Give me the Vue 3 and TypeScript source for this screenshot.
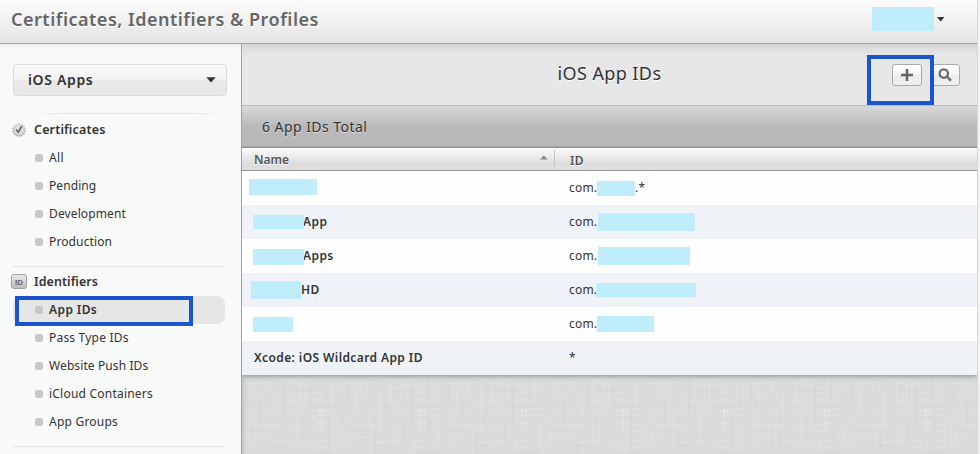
<script setup lang="ts">
interface Box { x: number; y: number; w: number; h: number }
interface Row { name: string; nameX: number; id: string; tail?: string; tailX?: number; nameBox?: Box; idBox?: Box }
interface Item { label: string; active?: boolean; ls: number }
interface Group { title: string; icon: 'seal' | 'id'; ls: number; items: Item[] }

const groups: Group[] = [
  { title: 'Certificates', icon: 'seal', ls: 0.15, items: [
    { label: 'All', ls: 0.4 }, { label: 'Pending', ls: 0.08 },
    { label: 'Development', ls: 0.12 }, { label: 'Production', ls: 0.12 },
  ] },
  { title: 'Identifiers', icon: 'id', ls: 0.05, items: [
    { label: 'App IDs', active: true, ls: 0.4 }, { label: 'Pass Type IDs', ls: 0.2 },
    { label: 'Website Push IDs', ls: 0.1 }, { label: 'iCloud Containers', ls: 0.22 },
    { label: 'App Groups', ls: 0.22 },
  ] },
]

// Box coordinates are relative to the cell that holds them.
const rows: Row[] = [
  { name: '', nameX: 12, id: 'com.', tail: '.*', tailX: 79, nameBox: { x: 7, y: 8, w: 68, h: 16 }, idBox: { x: 41, y: 10, w: 38, h: 15 } },
  { name: 'App', nameX: 61, id: 'com.', nameBox: { x: 11, y: 10, w: 51, h: 14 }, idBox: { x: 42, y: 8, w: 97, h: 18 } },
  { name: 'Apps', nameX: 61, id: 'com.', nameBox: { x: 11, y: 10, w: 51, h: 16 }, idBox: { x: 42, y: 8, w: 92, h: 18 } },
  { name: 'HD', nameX: 59, id: 'com.', nameBox: { x: 9, y: 8, w: 50, h: 18 }, idBox: { x: 40, y: 10, w: 100, h: 14 } },
  { name: '', nameX: 12, id: 'com.', nameBox: { x: 11, y: 10, w: 40, h: 15 }, idBox: { x: 41, y: 9, w: 57, h: 16 } },
  { name: 'Xcode: iOS Wildcard App ID', nameX: 12, id: '*' },
]

const place = (b: Box) => ({ left: b.x + 'px', top: b.y + 'px', width: b.w + 'px', height: b.h + 'px' })

const sealPoints = Array.from({ length: 28 }, (_, i) => {
  const r = i % 2 ? 6 : 7.5
  const a = (i * Math.PI) / 14
  return `${(8 + r * Math.sin(a)).toFixed(2)},${(8 - r * Math.cos(a)).toFixed(2)}`
}).join(' ')
</script>

<template>
  <div class="page">
    <header class="top">
      <h1>Certificates, Identifiers &amp; Profiles</h1>
      <div class="account">
        <span class="user"></span>
        <svg width="8" height="5" viewBox="0 0 8 5"><path d="M0 0h7.4L3.7 4.6z" fill="#333" /></svg>
      </div>
    </header>
    <div class="body">
      <nav class="side">
        <div class="select">
          <span>iOS Apps</span>
          <svg width="10" height="6" viewBox="0 0 10 6"><path d="M.3.2h9.4L5 5.6z" fill="#333" /></svg>
        </div>
        <div class="fade"></div>
        <section v-for="g in groups" :key="g.title" class="group">
          <div class="group-title">
            <svg v-if="g.icon === 'seal'" class="icon" width="16" height="16" viewBox="0 0 16 16">
              <defs><linearGradient id="sg" x1="0" y1="0" x2="0" y2="1"><stop offset="0" stop-color="#d8d8d8" /><stop offset="1" stop-color="#b4b4b4" /></linearGradient></defs>
              <polygon :points="sealPoints" fill="url(#sg)" />
              <circle cx="8" cy="8" r="4.9" fill="#dedede" />
              <path d="M5.1 7.4l2.2 2.8L10.8 4.1" fill="none" stroke="#5c5c5c" stroke-width="1.5" />
            </svg>
            <svg v-else class="icon" width="16" height="16" viewBox="0 0 16 16">
              <defs><linearGradient id="ig" x1="0" y1="0" x2="0" y2="1"><stop offset="0" stop-color="#e8e8e8" /><stop offset="1" stop-color="#bbb" /></linearGradient></defs>
              <rect x=".5" y=".5" width="15" height="14" rx="2.5" fill="url(#ig)" stroke="#a2a2a2" />
              <text x="8" y="10.7" text-anchor="middle" class="idtext">ID</text>
            </svg>
            <span :style="{ letterSpacing: g.ls + 'px' }">{{ g.title }}</span>
          </div>
          <div v-for="it in g.items" :key="it.label" class="item" :class="{ active: it.active }">
            <i></i><span :style="{ letterSpacing: it.ls + 'px' }">{{ it.label }}</span>
            <b v-if="it.active" class="frame nav-frame"></b>
          </div>
        </section>
      </nav>
      <main class="main">
        <div class="toolbar">
          <h2>iOS App IDs</h2>
          <div class="btn add">
            <svg width="12" height="12" viewBox="0 0 12 12"><path d="M6 0v12M0 6h12" stroke="#666" stroke-width="2.6" /></svg>
          </div>
          <div class="btn search">
            <svg width="15" height="14" viewBox="0 0 15 14"><circle cx="5.8" cy="5.6" r="4.2" fill="none" stroke="#6a6a6a" stroke-width="2.2" /><path d="M8.8 8.5l4.2 4.2" stroke="#6a6a6a" stroke-width="2.4" /></svg>
          </div>
          <b class="frame add-frame"></b>
        </div>
        <div class="count">6 App IDs Total</div>
        <div class="thead">
          <div class="th-name"><span>Name</span><svg width="8" height="5" viewBox="0 0 8 5"><path d="M0 4.6h7.6L3.8 .4z" fill="#888" /></svg></div>
          <div class="th-id">ID</div>
        </div>
        <div class="rows">
          <div v-for="(r, n) in rows" :key="n" class="row">
            <div class="cell name" :style="{ paddingLeft: r.nameX + 'px' }">
              {{ r.name }}<span v-if="r.nameBox" class="mask" :style="place(r.nameBox)"></span>
            </div>
            <div class="cell idc">
              <span>{{ r.id }}</span>
              <span v-if="r.idBox" class="mask" :style="place(r.idBox)"></span>
              <span v-if="r.tail" class="tail" :style="{ left: r.tailX + 'px' }">{{ r.tail }}</span>
            </div>
          </div>
        </div>
        <div class="linen">
          <svg width="100%" height="100%">
            <defs>
              <pattern id="weave" width="101" height="80" patternUnits="userSpaceOnUse">
                <g fill="none" stroke="#fff" stroke-opacity=".13" stroke-width="1">
                  <path d="M2 8.5h22M40 5.5h30M72 12.5h28M8 20.5h14M30 26.5h30M62 24.5h20M4 37.5h28M44 35.5h34M80 40.5h18M10 49.5h30M46 52.5h22M70 56.5h26M2 62.5h20M34 66.5h30M66 72.5h30" />
                  <path d="M12.5 10v26M24.5 2v18M36.5 16v40M48.5 6v22M58.5 2v24M63.5 8v18M78.5 26v34M90.5 4v30M6.5 42v30M28.5 50v26M54.5 38v30M72.5 60v18M96.5 44v30" />
                </g>
                <g fill="none" stroke="#b9bfc4" stroke-opacity=".18" stroke-width="1">
                  <path d="M14 4.5h20M50 16.5h24M2 28.5h24M66 32.5h30M30 44.5h30M4 55.5h24M56 60.5h34M20 70.5h24M70 77.5h26" />
                  <path d="M4.5 6v22M18.5 24v30M42.5 4v34M68.5 10v40M84.5 2v22M86.5 40v36M32.5 58v20M60.5 44v24" />
                </g>
                <path d="M77.5 34v7M81.5 34v7M75 36.5h9M77.5 46v7M81.5 46v7M75 48.5h9" stroke="#fff" stroke-opacity=".2" />
              </pattern>
            </defs>
            <rect width="100%" height="100%" fill="url(#weave)" />
          </svg>
        </div>
      </main>
    </div>
  </div>
</template>

<style>
body { background: #f2f2f2; }
</style>

<style scoped>
* { box-sizing: border-box; }
.page { width: 978px; height: 454px; display: flex; flex-direction: column; overflow: hidden; border-right: 1px solid #d8d8d8; font-family: "Noto Sans", sans-serif; font-size: 12px; color: #333; }
h1, h2 { margin: 0; }
.top { height: 44px; flex: none; display: flex; justify-content: space-between; padding: 0 32px 0 11px; background: linear-gradient(#fcfcfc, #e5e5e5); border-bottom: 1px solid #a2a5a3; }
h1 { font-size: 18px; line-height: 39px; font-weight: 600; color: #666; letter-spacing: 0.5px; white-space: nowrap; text-shadow: 0 1px 0 #fff; }
.account { display: flex; gap: 3px; padding-top: 7px; }
.user { width: 62px; height: 24px; background: #c0edfc; }
.account svg { margin-top: 10px; }
.body { display: flex; flex: 1; min-height: 0; }
.side { width: 242px; flex: none; background: linear-gradient(#eff1f0, #f8faf9 5px); border-right: 1px solid #9fa1a0; padding-top: 20px; }
.select { margin-left: 13px; width: 214px; height: 32px; display: flex; align-items: center; justify-content: space-between; padding: 0 10px 0 14px; border: 1px solid #d9dbda; border-radius: 4px; background: linear-gradient(#fcfcfc, #f2f2f2 49%, #e9e9e9 50%, #e7e7e7); font-size: 14px; font-weight: 600; letter-spacing: 0.65px; }
.select span { padding-bottom: 2px; }
.fade { height: 1px; width: 192px; margin: 17px 0 1px 32px; background: linear-gradient(90deg, transparent, #e0e2e1 20%, #e0e2e1 80%, transparent); }
.group { position: relative; height: 152px; }
.group::after { content: ""; position: absolute; left: 13px; width: 212px; top: 151px; height: 1px; background: #e0e2e1; }
.group + .group { height: 180px; }
.group + .group::after { top: 179px; }
.group-title { height: 29px; display: flex; align-items: center; gap: 7px; padding-left: 11px; font-size: 12.5px; font-weight: 600; }
.icon { flex: none; }
.idtext { font-size: 8px; font-weight: 600; fill: #666; font-family: "Liberation Sans", sans-serif; }
.item { position: relative; height: 28px; margin-left: 13px; width: 212px; display: flex; align-items: center; gap: 6px; padding-left: 22px; white-space: nowrap; }
.item span { padding-bottom: 2px; }
.item i { width: 8px; height: 8px; border-radius: 2px; background: #c7c8cb; }
.active { background: #e6e6e6; border-radius: 8px; font-weight: 600; }
.frame { position: absolute; border: 4px solid #1b55ce; }
.nav-frame { left: 2px; top: 0; width: 178px; height: 30px; }
.add-frame { left: 625px; top: 11px; width: 67px; height: 50px; }
.main { width: 735px; display: flex; flex-direction: column; }
.toolbar { position: relative; height: 62px; flex: none; display: flex; justify-content: flex-end; gap: 10px; padding: 20px 17px 0 0; background: linear-gradient(#d3d3d3, #e1e1e1 6px, #e7e7e7 14px); border-bottom: 1px solid #bcbcbc; }
h2 { flex: 1; padding-left: 95px; text-align: center; font-size: 18px; line-height: 19px; font-weight: 400; color: #333; letter-spacing: 0.4px; text-shadow: 0 1px 0 #fff; }
.btn { height: 22px; display: flex; align-items: center; justify-content: center; border: 1px solid #aaa; border-radius: 3px; background: linear-gradient(#fff, #f4f4f4 49%, #ebebeb 50%, #f0f0f0); }
.add { width: 30px; }
.search { width: 28px; padding-right: 2px; }
.count { height: 42px; flex: none; padding-left: 20px; line-height: 41px; font-size: 14px; letter-spacing: 0.45px; background: linear-gradient(#d9d9d9, #b9b9b9 50%, #b7b7b7); border-bottom: 1px solid #8e8e8e; box-shadow: inset 0 -1px #a8a8a8; text-shadow: 0 1px 0 #ddd; }
.thead { height: 23px; flex: none; display: flex; background: linear-gradient(#fcfcfc, #ddd 70%, #dedede); border-bottom: 1px solid #949494; color: #555; font-weight: 600; line-height: 23px; text-shadow: 0 1px 0 #fff; }
.th-name { width: 313px; padding: 0 7px 0 12px; display: flex; align-items: center; justify-content: space-between; position: relative; }
.th-name::after { content: ""; position: absolute; right: 0; top: 2px; bottom: 3px; width: 1px; background: #c4c4c4; }
.th-name span { padding-top: 1px; }
.th-name svg { margin-top: -3px; }
.th-id { padding: 1px 0 0 15px; letter-spacing: 0.3px; }
.rows { flex: none; position: relative; z-index: 1; box-shadow: 0 1px 5px #888; clip-path: inset(0 0 -10px 0); }
.row { height: 34px; display: flex; line-height: 33px; background: #fefefe; }
.row:nth-child(even) { background: #eff3f8; }
.cell { position: relative; white-space: nowrap; }
.name { width: 314px; font-weight: 600; letter-spacing: 0.4px; }
.idc { padding-left: 13px; flex: 1; letter-spacing: 0.2px; }
.mask { position: absolute; background: #c0edfc; }
.tail { position: absolute; top: 0; }
.linen { flex: 1; min-height: 0; background: linear-gradient(90deg, #c5c7c9, #d9dbdd 5px); }
.linen svg { display: block; }
</style>
